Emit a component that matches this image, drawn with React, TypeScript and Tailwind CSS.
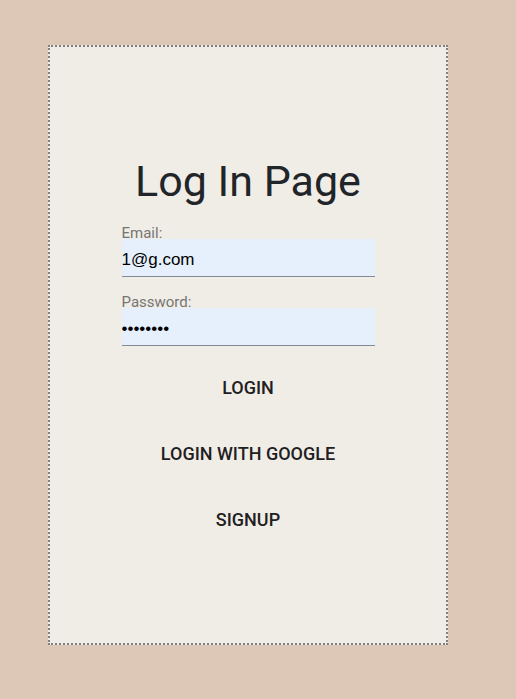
import React from "react";

const buttonClass =
  "h-9 px-4 rounded-xs text-[18px] leading-9 font-medium uppercase text-[#1f2022]";
const labelClass = "block text-[15px] leading-3 text-[#757575]";
const inputClass =
  "block w-full h-[38px] border-b border-[#848a93] bg-[#e6f0fd] pt-1 text-[17px] text-black outline-none font-['Liberation_Sans',Arial,sans-serif]";

export default function App() {
  return (
    <main className="min-h-screen bg-[#ddc7b6] pt-[45px] pl-12 pr-[68px] pb-[54px] font-[Roboto,sans-serif] text-[#212529]">
      <section className="flex min-h-[600px] w-full flex-col items-center border-2 border-dotted border-[#808080] bg-[#f0ede6] pt-[110px]">
        <h1 className="text-[43px] leading-12">Log In Page</h1>
        <form className="mt-[22px] flex w-[253px] flex-col items-center" onSubmit={(e) => e.preventDefault()}>
          <div className="w-full">
            <label htmlFor="email" className={labelClass}>Email:</label>
            <input id="email" type="email" defaultValue="1@g.com" className={inputClass} />
          </div>
          <div className="mt-[19px] w-full">
            <label htmlFor="password" className={labelClass}>Password:</label>
            <input id="password" type="password" defaultValue="password" className={inputClass} />
          </div>
          <button type="submit" className={`mt-6 ${buttonClass}`}>Login</button>
          <button type="button" className={`mt-[30px] whitespace-nowrap ${buttonClass}`}>Login with Google</button>
          <button type="button" className={`mt-[30px] ${buttonClass}`}>Signup</button>
        </form>
      </section>
    </main>
  );
}
